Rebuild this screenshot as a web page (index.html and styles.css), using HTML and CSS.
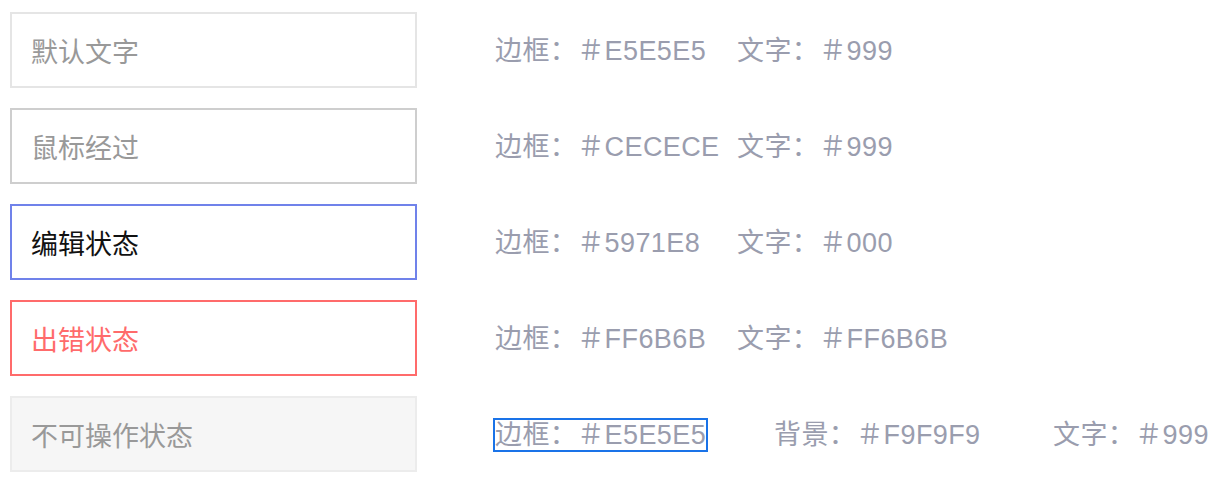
FILE: index.html
```html
<!DOCTYPE html>
<html lang="zh-CN">
<head>
<meta charset="utf-8">
<title>输入框状态</title>
<link rel="stylesheet" href="styles.css">
</head>
<body>
<div class="list">
  <div class="row">
    <div class="field field-default">默认文字</div>
    <div class="specs">
      <span class="spec spec-first">边框：＃E5E5E5</span>
      <span class="spec">文字：＃999</span>
    </div>
  </div>
  <div class="row">
    <div class="field field-hover">鼠标经过</div>
    <div class="specs">
      <span class="spec spec-first">边框：＃CECECE</span>
      <span class="spec">文字：＃999</span>
    </div>
  </div>
  <div class="row">
    <div class="field field-edit">编辑状态</div>
    <div class="specs">
      <span class="spec spec-first">边框：＃5971E8</span>
      <span class="spec">文字：＃000</span>
    </div>
  </div>
  <div class="row">
    <div class="field field-error">出错状态</div>
    <div class="specs">
      <span class="spec spec-first">边框：＃FF6B6B</span>
      <span class="spec">文字：＃FF6B6B</span>
    </div>
  </div>
  <div class="row">
    <div class="field field-disabled">不可操作状态</div>
    <div class="specs">
      <span class="spec spec-wide"><span class="selected">边框：＃E5E5E5</span></span>
      <span class="spec spec-wide">背景：＃F9F9F9</span>
      <span class="spec">文字：＃999</span>
    </div>
  </div>
</div>
</body>
</html>
```

FILE: styles.css
```css
html, body {
  margin: 0;
  padding: 0;
  background: #ffffff;
}

body {
  font-family: "Liberation Sans", "Noto Sans CJK SC", sans-serif;
}

.list {
  display: flex;
  flex-direction: column;
  gap: 20px;
  padding: 12px 0 0 10px;
}

.row {
  display: flex;
  align-items: center;
}

.field {
  box-sizing: border-box;
  width: 407px;
  height: 76px;
  border: 2px solid #e5e5e5;
  background: #ffffff;
  padding-left: 19px;
  display: flex;
  align-items: center;
  font-family: "Noto Sans CJK SC", sans-serif;
  font-size: 27px;
  color: #999999;
}

.field-hover {
  border-color: #cecece;
}

.field-edit {
  border-color: #7082ea;
  color: #111111;
}

.field-error {
  border-color: #ff6b6b;
  color: #ff6b6b;
}

.field-disabled {
  border-color: #ececec;
  background: #f6f6f6;
  color: #999999;
}

.specs {
  display: flex;
  align-items: center;
  margin-left: 78px;
  margin-top: -3px;
  font-size: 27px;
  letter-spacing: 0.4px;
  color: #9a9dae;
  white-space: nowrap;
}

.spec-first {
  width: 242px;
}

.spec-wide {
  width: 279px;
}

.selected {
  outline: 2px solid #1a73e8;
  outline-offset: 0;
}
```
